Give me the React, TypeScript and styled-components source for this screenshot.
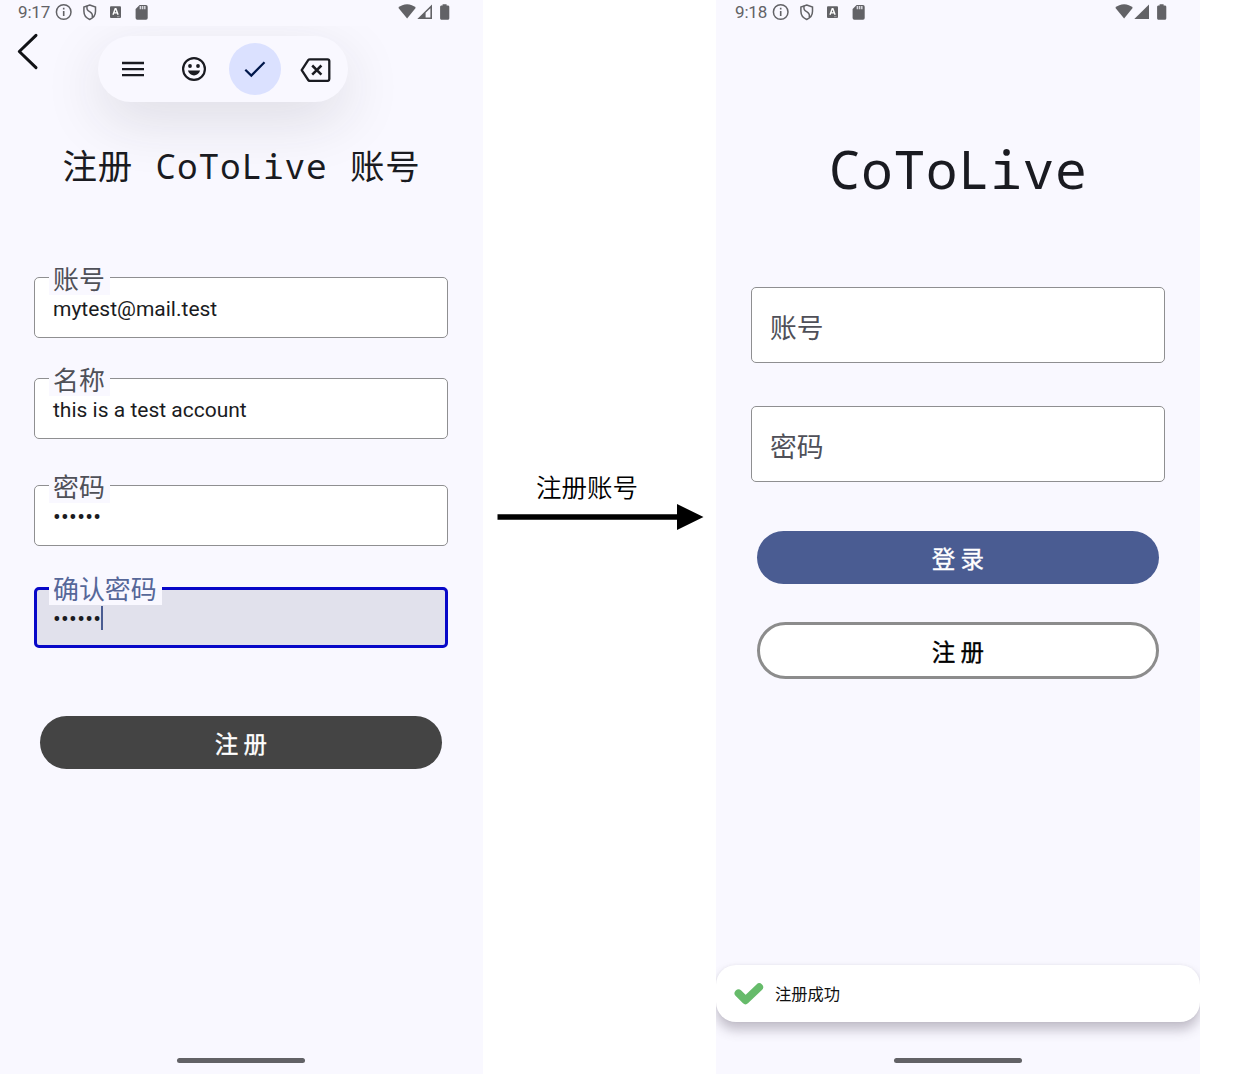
import React from "react";
import styled, { createGlobalStyle } from "styled-components";

const sans = `Roboto, "Noto Sans CJK SC", sans-serif`;
const cjk = `"Noto Sans CJK SC", sans-serif`;
const mono = `"Droid Sans Mono", "Noto Sans Mono", "DejaVu Sans Mono", "Noto Sans CJK SC", monospace`;
const surface = "#f9f8ff";

const GlobalStyle = createGlobalStyle`
  * { box-sizing: border-box; }
  body { margin: 0; background: #fff; }
`;

const Board = styled.main`
  display: flex;
  width: 1247px;
  height: 1074px;
  overflow: hidden;
  background: #fff;
  font-family: ${sans};
`;

const Phone = styled.section<{ $width: number }>`
  display: flex;
  flex-direction: column;
  flex: none;
  width: ${(p) => p.$width}px;
  height: 1074px;
  overflow: hidden;
  background: ${surface};
`;

const StatusBar = styled.header<{ $inset: number }>`
  display: flex;
  flex: none;
  justify-content: space-between;
  height: 26px;
  padding: 0 33px 0 ${(p) => p.$inset}px;
  color: #626266;
`;

const StatusGroup = styled.div`
  display: flex;
  align-items: center;
  height: 24px;
`;

const Clock = styled.span`
  width: 37px;
  font-size: 17px;
  line-height: 24px;
  letter-spacing: -0.15px;
`;

const Screen = styled.div`
  display: flex;
  flex-direction: column;
  flex: 1;
  min-height: 0;
  overflow: hidden;
`;

const TopRow = styled.div`
  display: flex;
  flex: none;
  height: 76px;
  padding: 7px 0 0 16px;
`;

const BackIcon = styled.svg`
  flex: none;
  width: 24px;
  height: 38px;
`;

const Toolbar = styled.div`
  display: flex;
  align-items: center;
  flex: none;
  width: 250px;
  height: 66px;
  margin: 3px 0 0 58px;
  padding-left: 9px;
  gap: 9px;
  border-radius: 33px;
  background: ${surface};
  box-shadow: 0 18px 58px rgba(40, 40, 50, 0.13);
`;

const Tool = styled.button<{ $active?: boolean }>`
  display: flex;
  align-items: center;
  justify-content: center;
  flex: none;
  width: 52px;
  height: 52px;
  padding: 0;
  border: 0;
  border-radius: 50%;
  color: ${(p) => (p.$active ? "#00174b" : "#1a1b21")};
  background: ${(p) => (p.$active ? "#dbe1ff" : "transparent")};
`;

const Title = styled.h1<{ $large?: boolean }>`
  margin: ${(p) => (p.$large ? "105px 0 2px" : "39px 0 1px")};
  height: ${(p) => (p.$large ? "76px" : "50px")};
  line-height: ${(p) => (p.$large ? "76px" : "50px")};
  font-family: ${mono};
  font-weight: 400;
  font-size: ${(p) => (p.$large ? "53px" : "34.5px")};
  letter-spacing: ${(p) => (p.$large ? "0.5px" : "0.8px")};
  word-spacing: ${(p) => (p.$large ? "0" : "0.9px")};
  text-align: center;
  white-space: pre;
  color: #1a1b21;
`;

const Form = styled.form<{ $top: number; $left: number }>`
  display: flex;
  flex-direction: column;
  width: ${(p) => p.$left + 414}px;
  padding: ${(p) => p.$top}px 0 0 ${(p) => p.$left}px;
`;

const Field = styled.div<{ $gap?: number; $focused?: boolean }>`
  display: flex;
  flex-direction: column;
  align-items: flex-start;
  height: 61px;
  margin-bottom: ${(p) => p.$gap ?? 0}px;
  padding-left: ${(p) => (p.$focused ? 12 : 14)}px;
  border: ${(p) => (p.$focused ? "3px solid #0808c8" : "1.5px solid #8f8f91")};
  border-radius: 5px;
  background: ${(p) => (p.$focused ? "#e1e1ec" : "#fff")};
`;

const FieldLabel = styled.label<{ $focused?: boolean }>`
  height: 35px;
  margin-top: ${(p) => (p.$focused ? -20 : -18)}px;
  padding: 0 5px 0 4px;
  background: ${surface};
  font-family: ${cjk};
  font-size: 25.9px;
  line-height: 35px;
  color: ${(p) => (p.$focused ? "#566799" : "#4f5058")};
`;

const FieldValue = styled.div<{ $dots?: boolean }>`
  display: flex;
  align-items: center;
  height: 28px;
  padding-left: 4px;
  padding-top: ${(p) => (p.$dots ? 1 : 0)}px;
  font-size: ${(p) => (p.$dots ? 23 : 21)}px;
  line-height: 28px;
  letter-spacing: ${(p) => (p.$dots ? 0.3 : 0)}px;
  color: #1a1b21;
`;

const Caret = styled.i`
  width: 2px;
  height: 24px;
  margin-top: -4px;
  background: #4a5c92;
`;

const EmptyField = styled.div`
  height: 76px;
  margin-bottom: 43px;
  padding-left: 18px;
  border: 1.5px solid #8f8f91;
  border-radius: 5px;
  background: #fff;
  font-family: ${cjk};
  font-size: 26.8px;
  line-height: 77px;
  color: #4f5058;
`;

const PillButton = styled.button<{ $tone: "dark" | "primary" | "outline"; $top: number }>`
  width: 402px;
  height: ${(p) => (p.$tone === "outline" ? 57 : 53)}px;
  margin: ${(p) => p.$top}px 6px 0;
  padding: ${(p) => (p.$tone === "outline" ? 1 : 2)}px 0 0;
  border: ${(p) => (p.$tone === "outline" ? "3px solid #8c8c8c" : "0")};
  border-radius: 29px;
  background: ${(p) => ({ dark: "#444", primary: "#4a5c92", outline: "#fff" })[p.$tone]};
  color: ${(p) => (p.$tone === "outline" ? "#000" : "#fff")};
  font-family: ${cjk};
  font-size: 23.5px;
  font-weight: 400;
  -webkit-text-stroke: 0.35px currentColor;
  line-height: 51px;
  white-space: pre;
`;

const Transition = styled.div`
  display: flex;
  flex-direction: column;
  flex: none;
  width: 233px;
  padding: 468px 0 0 14px;
`;

const TransitionLabel = styled.div`
  height: 36px;
  padding-left: 39px;
  font-family: ${cjk};
  font-size: 25.5px;
  font-weight: 350;
  line-height: 35px;
  color: #000;
`;

const Toast = styled.div`
  display: flex;
  align-items: center;
  flex: none;
  height: 57px;
  margin-top: auto;
  padding-left: 18px;
  gap: 11px;
  border-radius: 20px;
  background: #fff;
  color: #111;
  font-family: ${cjk};
  font-size: 16.3px;
  box-shadow: 0 8px 12px rgba(70, 60, 80, 0.3), 0 0 3px rgba(70, 60, 80, 0.08);
`;

const ToastText = styled.span`
  padding-bottom: 2px;
`;

const NavBar = styled.footer<{ $height: number; $shift?: number }>`
  display: flex;
  align-items: flex-end;
  justify-content: center;
  flex: none;
  height: ${(p) => p.$height}px;
  margin-top: ${(p) => (p.$height > 40 ? 0 : "auto")};
  padding: 0 ${(p) => p.$shift ?? 0}px 11.5px 0;
`;

const Handle = styled.span`
  width: 128px;
  height: 5px;
  border-radius: 3px;
  background: #626266;
`;

function LeftStatusIcons() {
  return (
    <svg width="96" height="24" viewBox="0 0 96 24" fill="none" stroke="#626266">
      <circle cx="8.7" cy="12" r="7.3" strokeWidth="1.5" />
      <path d="M8.7 11v5M8.7 7.7v1.7" strokeWidth="1.6" />
      <path d="M34.7 5l5.8 2v4.3c0 4.1-2.4 6.8-5.8 8.2-3.4-1.4-5.8-4.1-5.8-8.2V7z" strokeWidth="1.5" />
      <path d="M32 5.8c-.4 3.6.2 4.5 3 6.1 2.4 1.5 3 2.7 2.2 5.6" strokeWidth="1.5" />
      <rect x="55" y="6.3" width="11" height="11.7" rx="1" fill="#626266" stroke="none" />
      <path d="M58 14.8l2.200-6h.7l2.200 6M58.800 12.900h3.500" stroke="#fff" strokeWidth="1.4" />
      <path d="M62 16.7h2.600" stroke="#b0b0b4" strokeWidth=".8" />
      <path d="M84.600 5H91a1.700 1.700 0 0 1 1.700 1.700v11.400a1.700 1.700 0 0 1-1.700 1.700H82.300a1.700 1.700 0 0 1-1.700-1.700V9z" fill="#626266" stroke="none" />
      <path d="M85.400 6v3.200M87.600 6v3.200M89.800 6v3.200" stroke="#d8d8de" strokeWidth="1.5" />
    </svg>
  );
}

function RightStatusIcons({ full }: { full?: boolean }) {
  return (
    <svg width="52" height="24" viewBox="0 0 52 24" fill="#626266">
      <path d="M.3 7.800C2.600 5.700 5.800 4.300 9.100 4.300s6.400 1.400 8.700 3.500L9.100 18.500z" />
      {full ? (
        <path d="M19.300 19L34 4.600V19z" />
      ) : (
        <path fillRule="evenodd" d="M19.300 19L34 4.600V19zM27.600 12.800v4.700h4.800V8.200z" />
      )}
      <path d="M44.600 4.200h4v1.400h1.200c.9 0 1.500.6 1.500 1.400v11.200c0 .9-.6 1.500-1.500 1.500h-6.200c-.9 0-1.500-.6-1.500-1.500V7c0-.8.6-1.400 1.500-1.400h1z" />
    </svg>
  );
}

function Status({ time, full }: { time: string; full?: boolean }) {
  return (
    <StatusBar $inset={full ? 19 : 18}>
      <StatusGroup>
        <Clock>{time}</Clock>
        <LeftStatusIcons />
      </StatusGroup>
      <StatusGroup>
        <RightStatusIcons full={full} />
      </StatusGroup>
    </StatusBar>
  );
}

type InputProps = { label: string; value: string; gap?: number; focused?: boolean; dots?: boolean };

function Input({ label, value, gap, focused, dots }: InputProps) {
  return (
    <Field $gap={gap} $focused={focused}>
      <FieldLabel $focused={focused}>{label}</FieldLabel>
      <FieldValue $dots={dots}>
        {value}
        {focused && <Caret />}
      </FieldValue>
    </Field>
  );
}

export default function App() {
  return (
    <Board>
      <GlobalStyle />
      <Phone $width={483}>
        <Status time="9:17" />
        <Screen>
          <TopRow>
            <BackIcon viewBox="0 0 24 38" fill="none" stroke="#111216" strokeWidth="3" strokeLinecap="round" strokeLinejoin="round">
              <path d="M20 2.300L3.300 18.500 20 34.700" />
            </BackIcon>
            <Toolbar>
              <Tool type="button">
                <svg width="24" height="24" viewBox="0 0 24 24" stroke="currentColor" strokeWidth="2.3">
                  <path d="M1 6h22M1 12.200h22M1 18.200h22" />
                </svg>
              </Tool>
              <Tool type="button">
                <svg width="26" height="26" viewBox="0 0 26 26" fill="none" stroke="currentColor" strokeWidth="2.2">
                  <circle cx="13" cy="13" r="10.9" />
                  <circle cx="9" cy="10" r="1.9" fill="currentColor" stroke="none" />
                  <circle cx="17" cy="10" r="1.9" fill="currentColor" stroke="none" />
                  <path d="M6.900 14.600h12.200c-.8 3-3.300 4.800-6.100 4.800s-5.300-1.800-6.100-4.800z" fill="currentColor" stroke="none" />
                </svg>
              </Tool>
              <Tool type="button" $active>
                <svg width="24" height="24" viewBox="0 0 24 24" fill="none" stroke="currentColor" strokeWidth="2.2">
                  <path d="M2.300 12.700L8.300 18.600 21.500 5.200" />
                </svg>
              </Tool>
              <Tool type="button">
                <svg width="32" height="26" viewBox="0 0 32 26" fill="none" stroke="currentColor" strokeWidth="2.3" strokeLinejoin="round">
                  <path d="M10 3.300H27.500c1.200 0 1.800.6 1.800 1.800v18c0 1.200-.6 1.800-1.800 1.800H10c-.9 0-1.400-.3-1.800-.9L1.700 14.100l6.500-9.900c.4-.6.900-.9 1.800-.9z" />
                  <path d="M12.200 9.500l9.200 9.200M21.400 9.500l-9.200 9.200" strokeWidth="2.5" />
                </svg>
              </Tool>
            </Toolbar>
          </TopRow>
          <Title>注册 CoToLive 账号</Title>
          <Form $top={85} $left={34}>
            <Input label="账号" value="mytest@mail.test" gap={40} />
            <Input label="名称" value="this is a test account" gap={46} />
            <Input label="密码" value="••••••" gap={41} dots />
            <Input label="确认密码" value="••••••" focused dots />
            <PillButton type="button" $tone="dark" $top={68}>注 册</PillButton>
          </Form>
          <NavBar $height={30} $shift={1}>
            <Handle />
          </NavBar>
        </Screen>
      </Phone>

      <Transition>
        <TransitionLabel>注册账号</TransitionLabel>
        <svg width="208" height="26" viewBox="0 0 208 26">
          <path d="M.5 10.200H180V0L206.500 13 180 26V15.700H.5z" />
        </svg>
      </Transition>

      <Phone $width={484}>
        <Status time="9:18" full />
        <Screen>
          <Title $large>CoToLive</Title>
          <Form $top={78} $left={35}>
            <EmptyField>账号</EmptyField>
            <EmptyField>密码</EmptyField>
            <PillButton type="button" $tone="primary" $top={6}>登 录</PillButton>
            <PillButton type="button" $tone="outline" $top={38}>注 册</PillButton>
          </Form>
          <Toast>
            <svg width="30" height="24" viewBox="0 0 30 24" fill="none" stroke="#66bb6a" strokeWidth="7.8" strokeLinecap="round" strokeLinejoin="round">
              <path d="M4.500 11.300l7 7L25.200 5.200" />
            </svg>
            <ToastText>注册成功</ToastText>
          </Toast>
          <NavBar $height={52}>
            <Handle />
          </NavBar>
        </Screen>
      </Phone>
    </Board>
  );
}
